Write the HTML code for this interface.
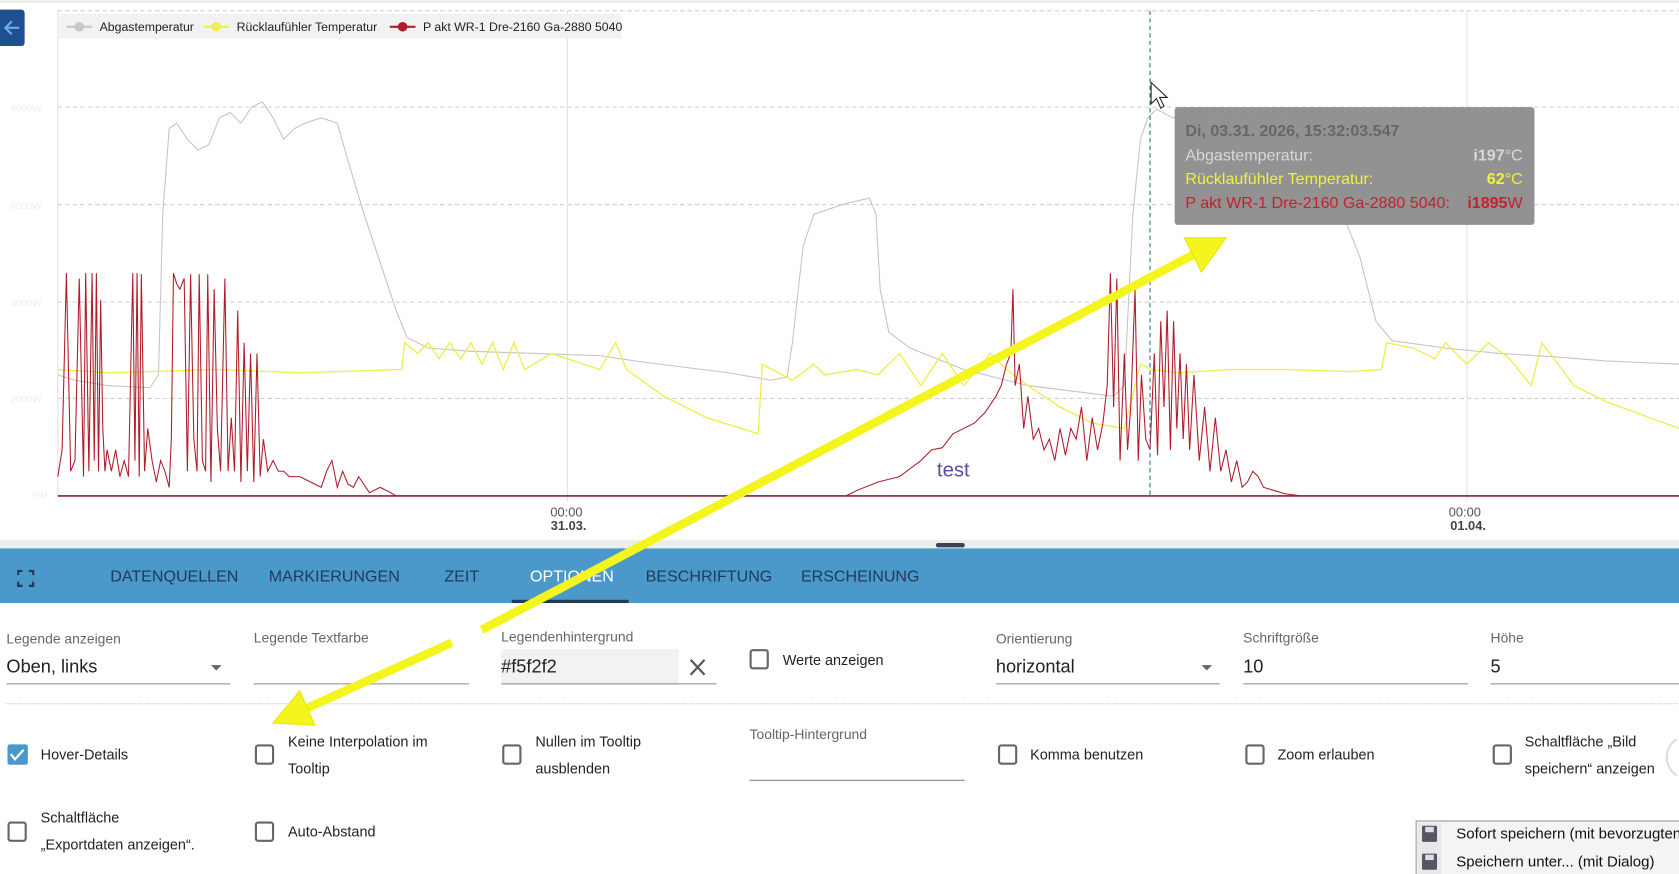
<!DOCTYPE html>
<html><head><meta charset="utf-8"><style>
html,body{margin:0;padding:0;background:#fff;overflow:hidden}
svg{display:block;font-family:"Liberation Sans",sans-serif}
</style></head><body>
<svg width="1679" height="874" viewBox="0 0 1568 816" preserveAspectRatio="none" xmlns="http://www.w3.org/2000/svg">
<rect width="1568" height="816" fill="#fff"/>
<line x1="0" y1="1.5" x2="1568" y2="1.5" stroke="#e6e6e6" stroke-width="2"/>
<!-- grid -->
<g stroke="#d0d0d0" stroke-dasharray="4,3" stroke-width="1">
<line x1="54" y1="10" x2="1568" y2="10"/><line x1="54" y1="100" x2="1568" y2="100"/>
<line x1="54" y1="191" x2="1568" y2="191"/><line x1="54" y1="282" x2="1568" y2="282"/>
<line x1="54" y1="372" x2="1568" y2="372"/></g>
<g stroke="#e2e2e2"><line x1="54" y1="10" x2="54" y2="463"/><line x1="530" y1="10" x2="530" y2="468"/><line x1="1370" y1="10" x2="1370" y2="468"/></g>
<g fill="#eeeeee" font-size="9"><text x="10" y="104">8000W</text><text x="10" y="195">6000W</text><text x="10" y="286">4000W</text><text x="10" y="376">2000W</text><text x="30" y="466">0W</text></g>
<!-- gray -->
<polyline fill="none" stroke="#c4c4c4" stroke-width="1" points="54,350 70,355 100,360 140,362 148,350 152,200 158,120 165,115 175,130 185,140 195,135 205,110 215,105 225,115 235,100 245,95 255,110 265,130 275,120 285,115 300,110 315,115 325,150 340,200 360,260 370,290 380,315 400,325 440,328 500,330 560,332 600,338 680,348 720,355 735,352 740,320 750,230 760,200 790,190 812,185 818,200 822,270 830,310 850,325 900,345 960,360 1000,365 1040,370 1050,360 1058,200 1065,130 1072,110 1080,102 1095,110 1120,108 1150,105 1180,115 1200,110 1230,150 1250,190 1270,240 1285,300 1300,318 1350,325 1400,330 1450,333 1500,337 1568,340"/>
<!-- yellow -->
<polyline fill="none" stroke="#eeee44" stroke-width="1.2" points="54,345 100,348 140,347 200,345 280,348 375,345 378,320 390,330 400,320 410,335 420,320 430,335 440,320 450,340 460,320 470,345 480,320 490,345 515,330 560,345 575,320 585,345 620,370 660,390 708,405 712,340 740,355 760,340 770,350 800,345 820,350 840,330 860,360 870,345 880,330 900,360 925,330 940,345 960,360 990,380 1020,395 1050,400 1065,340 1075,345 1100,348 1150,345 1200,345 1260,347 1290,345 1295,320 1320,325 1340,335 1350,320 1370,340 1390,320 1410,335 1430,360 1440,320 1470,360 1500,375 1568,400"/>
<!-- red -->
<polyline fill="none" stroke="#b01c2a" stroke-width="1" points="54,445 58,420 62,255 66,440 70,430 74,260 78,445 80,255 83,440 86,255 88,430 90,255 92,440 94,280 96,400 98,440 100,420 104,440 108,420 112,445 116,430 120,445 124,255 126,430 128,255 130,445 132,256 135,440 138,400 142,430 146,450 150,430 154,440 158,455 160,410 162,255 165,265 168,270 172,260 175,440 178,256 181,410 184,440 186,256 189,430 192,440 194,256 197,450 200,270 203,400 206,440 210,260 213,440 216,390 219,440 222,290 225,450 228,320 231,440 234,330 237,450 240,330 243,445 246,410 250,440 255,430 260,440 265,440 270,445 280,445 290,450 300,455 305,440 310,430 315,455 320,440 325,452 330,455 335,445 345,460 355,455 365,460 370,463 790,463 800,458 820,450 840,445 860,430 870,420 880,418 890,405 900,400 910,395 920,385 930,370 935,360 940,340 944,330 946,270 948,360 952,340 956,400 960,370 965,410 970,400 975,420 980,410 985,430 990,400 995,425 1000,400 1005,410 1010,380 1015,430 1020,390 1025,420 1030,395 1034,360 1037,255 1040,380 1043,260 1046,430 1050,330 1053,420 1056,380 1060,270 1063,430 1066,350 1070,410 1074,420 1078,330 1081,425 1084,300 1087,380 1090,290 1093,420 1096,300 1099,400 1102,330 1105,410 1108,340 1111,420 1115,350 1120,430 1125,380 1130,440 1135,390 1140,440 1145,420 1150,450 1155,430 1160,455 1165,450 1170,440 1175,445 1180,455 1190,458 1200,461 1215,463 1568,463"/>
<line x1="54" y1="463" x2="1568" y2="463" stroke="#7a2a30" stroke-width="1.5"/>
<line x1="1074" y1="10" x2="1074" y2="463" stroke="#2a6a8a" stroke-dasharray="4,3"/>
<text x="875" y="445" font-size="19" fill="#5a4ea0">test</text>
<!-- axis labels -->
<text x="529" y="482" font-size="12" fill="#555" text-anchor="middle">00:00</text>
<text x="531" y="495" font-size="12" font-weight="bold" fill="#444" text-anchor="middle">31.03.</text>
<text x="1368" y="482" font-size="12" fill="#555" text-anchor="middle">00:00</text>
<text x="1371" y="495" font-size="12" font-weight="bold" fill="#444" text-anchor="middle">01.04.</text>
<!-- legend -->
<rect x="55" y="13" width="525" height="23" fill="#f2f2f2"/>
<g stroke-width="2"><line x1="62" y1="25" x2="86" y2="25" stroke="#c8c8c8"/><circle cx="74" cy="25" r="4.5" fill="#c8c8c8"/>
<line x1="190" y1="25" x2="214" y2="25" stroke="#eeee55"/><circle cx="202" cy="25" r="4.5" fill="#eeee55"/>
<line x1="364" y1="25" x2="388" y2="25" stroke="#b01c2a"/><circle cx="376" cy="25" r="4.5" fill="#b01c2a"/></g>
<g font-size="11.5" fill="#222"><text x="93" y="29">Abgastemperatur</text><text x="221" y="29">Rücklaufühler Temperatur</text><text x="395" y="29">P akt WR-1 Dre-2160 Ga-2880 5040</text></g>
<!-- back button -->
<rect x="-6" y="9" width="29" height="34" rx="3" fill="#1f4f8f"/>
<path d="M18 26 H5 M11 20 L5 26 L11 32" fill="none" stroke="#6aaee8" stroke-width="2"/>
<!-- cursor -->
<path d="M1075 77 L1075 97 L1080 92 L1084 101 L1087 99 L1083 91 L1090 91 Z" fill="#fff" stroke="#222" stroke-width="1"/>
<!-- tooltip -->
<rect x="1097" y="100" width="336" height="110" rx="3" fill="#8c8c8c" opacity="0.95"/>
<g font-size="15"><text x="1107" y="127" fill="#666" font-weight="bold">Di, 03.31. 2026, 15:32:03.547</text>
<text x="1107" y="150" fill="#d8d8d8">Abgastemperatur:</text><text x="1422" y="150" fill="#d8d8d8" text-anchor="end"><tspan font-weight="bold">i197</tspan>°C</text>
<text x="1107" y="172" fill="#f0f040">Rücklaufühler Temperatur:</text><text x="1422" y="172" fill="#f0f040" text-anchor="end"><tspan font-weight="bold">62</tspan>°C</text>
<text x="1107" y="194" fill="#c4202e">P akt WR-1 Dre-2160 Ga-2880 5040:</text><text x="1422" y="194" fill="#c4202e" text-anchor="end"><tspan font-weight="bold">i1895</tspan>W</text></g>
<!-- divider -->
<rect x="0" y="504" width="1568" height="8" fill="#eceeee"/>
<rect x="874" y="507" width="27" height="4" rx="2" fill="#3a4658"/>
<!-- tab bar -->
<rect x="0" y="512" width="1568" height="51" fill="#4b98ca"/>
<g fill="none" stroke="#213a5a" stroke-width="2"><path d="M17 537 V533 H21 M27 533 H31 V537 M31 543 V547 H27 M21 547 H17 V543"/></g>
<g font-size="15" fill="#223a5a"><text x="103" y="543">DATENQUELLEN</text><text x="251" y="543">MARKIERUNGEN</text><text x="415" y="543">ZEIT</text><text x="603" y="543">BESCHRIFTUNG</text><text x="748" y="543">ERSCHEINUNG</text></g>
<text x="495" y="543" font-size="15" fill="#fff">OPTIONEN</text>
<rect x="478" y="560" width="109" height="3" fill="#1d3a5e"/>
<!-- row1 -->
<g font-size="13" fill="#666"><text x="6" y="601">Legende anzeigen</text><text x="237" y="600">Legende Textfarbe</text><text x="468" y="599">Legendenhintergrund</text><text x="930" y="601">Orientierung</text><text x="1161" y="600">Schriftgröße</text><text x="1392" y="600">Höhe</text></g>
<rect x="468" y="606" width="166" height="32" fill="#f2f2f2"/>
<g font-size="17" fill="#222"><text x="6" y="628">Oben, links</text><text x="468" y="628">#f5f2f2</text><text x="930" y="628">horizontal</text><text x="1161" y="628">10</text><text x="1392" y="628">5</text></g>
<path d="M197 621 h10 l-5 5 z M1122 621 h10 l-5 5 z" fill="#666"/>
<path d="M645 616 l13 14 M658 616 l-13 14" stroke="#555" stroke-width="2"/>
<g stroke="#888" stroke-width="1"><line x1="6" y1="638.5" x2="215" y2="638.5"/><line x1="237" y1="638.5" x2="438" y2="638.5"/><line x1="468" y1="638.5" x2="669" y2="638.5"/><line x1="930" y1="638.5" x2="1139" y2="638.5"/><line x1="1161" y1="638.5" x2="1371" y2="638.5"/><line x1="1392" y1="638.5" x2="1568" y2="638.5"/><line x1="700" y1="728.5" x2="901" y2="728.5"/></g>
<line x1="6" y1="657" x2="1568" y2="657" stroke="#ccc" stroke-dasharray="1,1"/>
<!-- checkboxes -->
<g fill="none" stroke="#666" stroke-width="2">
<rect x="701" y="607" width="16" height="17" rx="2"/>
<rect x="239" y="696" width="16" height="17" rx="2"/><rect x="470" y="696" width="16" height="17" rx="2"/><rect x="933" y="696" width="16" height="17" rx="2"/><rect x="1164" y="696" width="16" height="17" rx="2"/><rect x="1395" y="696" width="16" height="17" rx="2"/>
<rect x="8" y="768" width="16" height="17" rx="2"/><rect x="239" y="768" width="16" height="17" rx="2"/></g>
<rect x="7" y="695" width="19" height="19" rx="2" fill="#4a98ca"/>
<path d="M10 704 l4 5 l8 -9" fill="none" stroke="#fff" stroke-width="2"/>
<g font-size="13.5" fill="#222">
<text x="731" y="621">Werte anzeigen</text>
<text x="38" y="709">Hover-Details</text>
<text x="269" y="697">Keine Interpolation im</text><text x="269" y="722">Tooltip</text>
<text x="500" y="697">Nullen im Tooltip</text><text x="500" y="722">ausblenden</text>
<text x="962" y="709">Komma benutzen</text><text x="1193" y="709">Zoom erlauben</text>
<text x="1424" y="697">Schaltfläche „Bild</text><text x="1424" y="722">speichern“ anzeigen</text>
<text x="38" y="768">Schaltfläche</text><text x="38" y="793">„Exportdaten anzeigen“.</text>
<text x="269" y="781">Auto-Abstand</text></g>
<text x="700" y="690" font-size="13" fill="#666">Tooltip-Hintergrund</text>
<path d="M1566 690 a20 20 0 0 0 0 34" fill="none" stroke="#ddd" stroke-width="2"/>
<!-- context menu -->
<rect x="1322.5" y="766.5" width="250" height="52" fill="#f4f4f4" stroke="#999"/>
<rect x="1324" y="768" width="22" height="48" fill="#e8e8e8"/>
<g fill="#556"><rect x="1328" y="771" width="14" height="15" rx="1"/><rect x="1328" y="797" width="14" height="15" rx="1"/></g>
<g fill="#dde"><rect x="1331" y="772" width="8" height="5"/><rect x="1331" y="798" width="8" height="5"/></g>
<g font-size="14" fill="#111"><text x="1360" y="783">Sofort speichern (mit bevorzugten</text><text x="1360" y="809">Speichern unter... (mit Dialog)</text></g>
<!-- arrows -->
<g fill="#f5f51e" stroke="#e6e600" stroke-width="1">
<line x1="450" y1="588" x2="1114" y2="238" stroke="#f5f51e" stroke-width="8"/>
<polygon points="1145,222 1122,254 1106,222"/>
<line x1="422" y1="600" x2="287" y2="661" stroke="#f5f51e" stroke-width="8"/>
<polygon points="255,675 294,677 280,645"/></g>
</svg>
</body></html>
